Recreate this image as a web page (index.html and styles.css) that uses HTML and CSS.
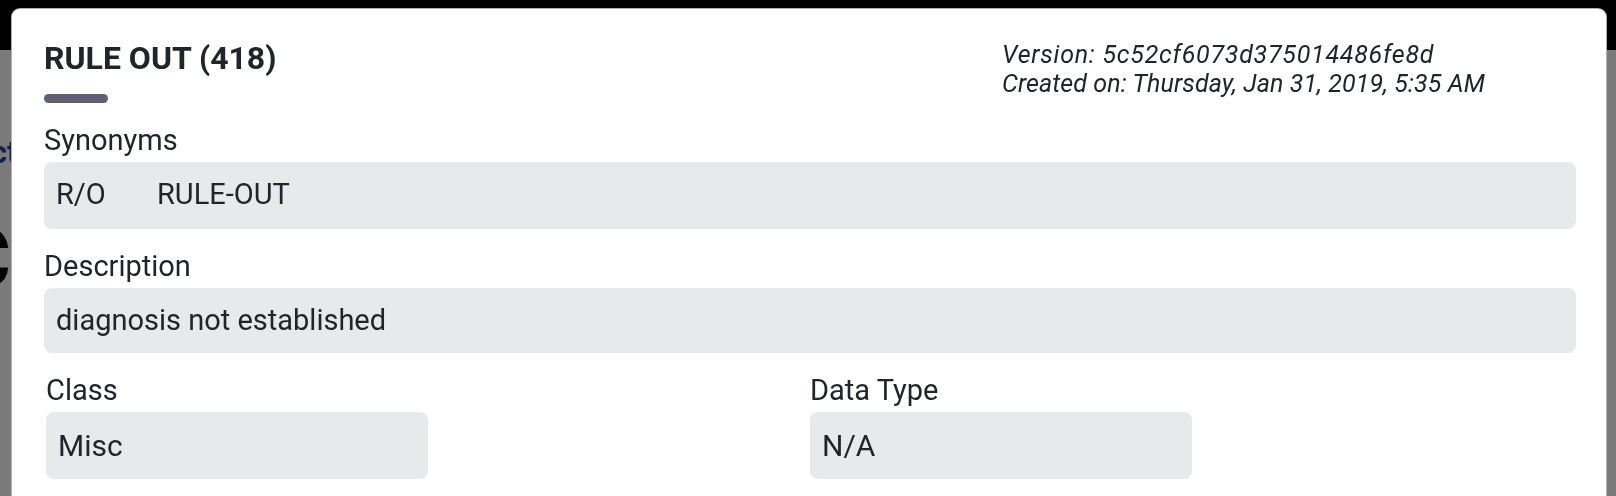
FILE: index.html
```html
<!DOCTYPE html>
<html>

<head>
    <meta charset="utf-8">
    <title>RULE OUT (418)</title>
    <link rel="stylesheet" href="styles.css">
</head>

<body>
    <div class="app">
        <nav class="navbar"></nav>
        <div class="app-content">
            <p class="crumb">Select</p>
            <h1 class="page-title">Concept</h1>
        </div>
    </div>
    <div class="backdrop"></div>

    <div class="modal">
        <div class="modal-header">
            <div>
                <h2 class="concept-title">RULE OUT (418)</h2>
                <div class="title-bar"></div>
            </div>
            <div class="meta">
                <div class="meta-version">Version: 5c52cf6073d375014486fe8d</div>
                <div class="meta-created">Created on: Thursday, Jan 31, 2019, 5:35 AM</div>
            </div>
        </div>

        <div class="field">
            <div class="field-label">Synonyms</div>
            <div class="field-value synonyms">
                <span>R/O</span>
                <span>RULE-OUT</span>
            </div>
        </div>

        <div class="field">
            <div class="field-label">Description</div>
            <div class="field-value">diagnosis not established</div>
        </div>

        <div class="field-row">
            <div class="field">
                <div class="field-label">Class</div>
                <div class="field-value half">Misc</div>
            </div>
            <div class="field">
                <div class="field-label">Data Type</div>
                <div class="field-value half">N/A</div>
            </div>
        </div>
    </div>
</body>

</html>
```

FILE: styles.css
```css
body {
    margin: 0;
    font-family: Roboto, "Liberation Sans", sans-serif;
    color: #212529;
    background-color: #fff;
    overflow: hidden;
}

.navbar {
    height: 50px;
    background-color: #000;
}

.app-content {
    width: 12px;
    overflow: hidden;
    padding-top: 84px;
}

.crumb {
    margin: 0 0 0 -70px;
    font-size: 31px;
    font-weight: bold;
    color: #2a3fae;
    white-space: nowrap;
}

.page-title {
    margin: 38px 0 0 -44px;
    font-size: 84px;
    font-weight: bold;
    color: #000;
    white-space: nowrap;
}

.backdrop {
    position: fixed;
    top: 0;
    left: 0;
    right: 0;
    bottom: 0;
    background-color: rgba(0, 0, 0, 0.52);
}

.modal {
    position: fixed;
    top: 8px;
    left: 11px;
    width: 1596px;
    height: 520px;
    box-sizing: border-box;
    padding: 30px 30px 0 32px;
    background-color: #fff;
    border: 1px solid rgba(0, 0, 0, 0.3);
    border-radius: 9px;
}

.modal-header {
    display: grid;
    grid-template-columns: 1fr 574px;
}

.concept-title {
    margin: 0;
    font-size: 32px;
    line-height: 38px;
    font-weight: bold;
}

.title-bar {
    width: 64px;
    height: 9px;
    margin-top: 17px;
    background-color: #5c6070;
    border-radius: 5px;
}

.meta {
    padding-top: 1px;
    font-size: 25px;
    line-height: 29px;
    font-style: italic;
    font-weight: 400;
}

.meta-version {
    letter-spacing: 0.75px;
}

.meta-created {
    letter-spacing: 0.1px;
}

.field {
    margin-top: 20px;
}

.field-label {
    font-size: 29px;
    line-height: 34px;
}

.field-value {
    margin-top: 5px;
    padding: 15px 12px 16px;
    font-size: 29px;
    line-height: 34px;
    background-color: #e8e9eb;
    border-radius: 8px;
}

.synonyms {
    padding-bottom: 18px;
}

.synonyms span {
    margin-right: 44px;
}

.field-row {
    display: grid;
    grid-template-columns: 1fr 1fr;
    padding: 0 2px;
}

.field-value.half {
    width: 50%;
    box-sizing: border-box;
    padding: 17px 12px 16px;
    font-size: 30px;
}
```
